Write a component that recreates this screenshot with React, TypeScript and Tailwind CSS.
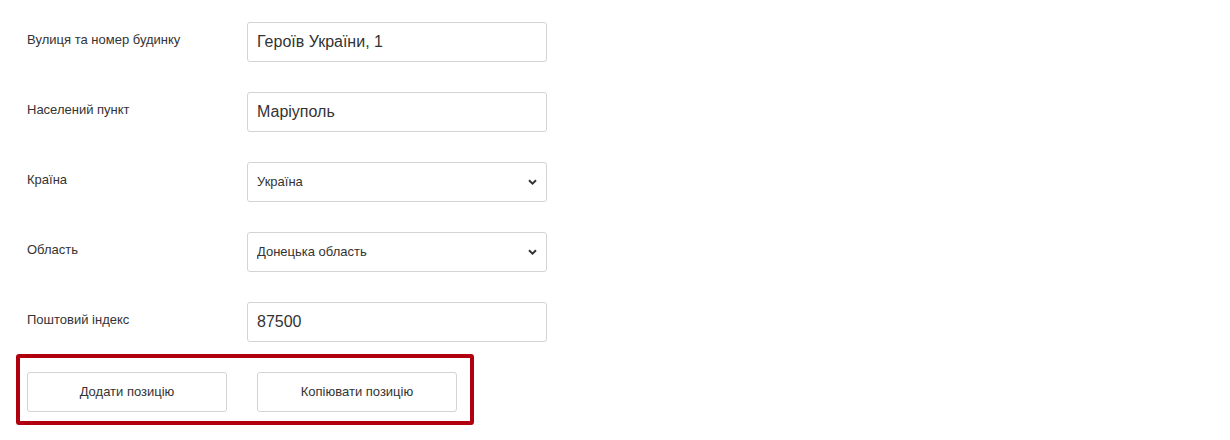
import { ChangeEvent, useState } from "react";

type Field = {
  label: string;
  value: string;
  options?: string[];
};

const fields: Field[] = [
  { label: "Вулиця та номер будинку", value: "Героїв України, 1" },
  { label: "Населений пункт", value: "Маріуполь" },
  { label: "Країна", value: "Україна", options: ["Україна", "Польща", "Молдова"] },
  {
    label: "Область",
    value: "Донецька область",
    options: ["Донецька область", "Київська область", "Львівська область"],
  },
  { label: "Поштовий індекс", value: "87500" },
];

const Chevron = () => (
  <svg
    width="9"
    height="6"
    viewBox="0 0 9 6"
    className="pointer-events-none absolute right-[10px] top-1/2 -translate-y-1/2"
  >
    <path d="M1 1.2 L4.5 4.6 L8 1.2" fill="none" stroke="#333" strokeWidth="2" />
  </svg>
);

const Row = ({ field }: { field: Field }) => {
  const [value, setValue] = useState(field.value);
  const onChange = (e: ChangeEvent<HTMLInputElement | HTMLSelectElement>) =>
    setValue(e.target.value);

  return (
    <div className="flex items-start">
      <label className="w-[220px] pt-[9px] text-[13px] leading-[18px] text-[#333]">
        {field.label}
      </label>
      {field.options ? (
        <div className="relative w-[300px]">
          <select
            value={value}
            onChange={onChange}
            className="h-10 w-full appearance-none rounded-[3px] border border-[#d4d4d4] bg-white pl-[9px] pr-8 text-[13px] text-[#333] outline-none"
          >
            {field.options.map((o) => (
              <option key={o}>{o}</option>
            ))}
          </select>
          <Chevron />
        </div>
      ) : (
        <input
          value={value}
          onChange={onChange}
          className="h-10 w-[300px] rounded-[3px] border border-[#d4d4d4] bg-white px-[9px] text-[16px] text-[#333] outline-none"
        />
      )}
    </div>
  );
};

export default function App() {
  return (
    <div className="min-h-[440px] bg-white px-4 pt-[22px] font-['Liberation_Sans',Arial,sans-serif]">
      <div className="flex flex-col gap-[30px] pl-[11px]">
        {fields.map((f) => (
          <Row key={f.label} field={f} />
        ))}
      </div>
      <div className="mt-[12px] flex h-[71px] w-[458px] gap-[30px] rounded-[3px] border-4 border-[#b00010] pl-[7px] pt-[14px]">
        <button className="h-10 w-[200px] rounded-[3px] border border-[#d4d4d4] bg-white text-[13px] text-[#333]">
          Додати позицію
        </button>
        <button className="h-10 w-[200px] rounded-[3px] border border-[#d4d4d4] bg-white text-[13px] text-[#333]">
          Копіювати позицію
        </button>
      </div>
    </div>
  );
}
